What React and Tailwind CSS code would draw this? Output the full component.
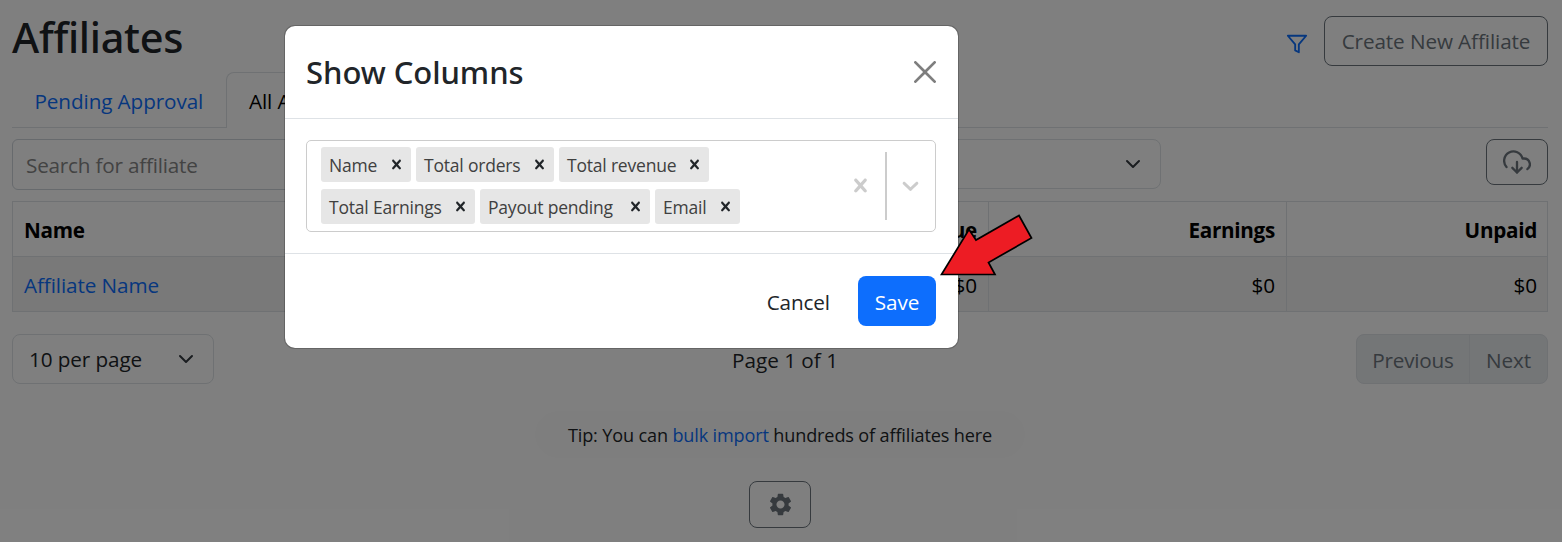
import { FiFilter, FiDownloadCloud } from 'react-icons/fi'
import { MdSettings } from 'react-icons/md'

const rows = [
  ['Name', 'Total orders', 'Total revenue'],
  ['Total Earnings', 'Payout pending', 'Email'],
]
const chipWidths = {
  'Name': 'w-[90px]',
  'Total orders': 'w-[138px]',
  'Total revenue': 'w-[150px]',
  'Total Earnings': 'w-[154px]',
  'Payout pending': 'w-[170px]',
  'Email': 'w-[85px]',
}

function Cross({ className }) {
  return (
    <svg viewBox="0 0 20 20" fill="currentColor" className={className}>
      <path d="M14.348 14.849c-0.469 0.469-1.229 0.469-1.697 0l-2.651-3.030-2.651 3.029c-0.469 0.469-1.229 0.469-1.697 0-0.469-0.469-0.469-1.229 0-1.697l2.758-3.15-2.759-3.152c-0.469-0.469-0.469-1.228 0-1.697s1.228-0.469 1.697 0l2.652 3.031 2.651-3.031c0.469-0.469 1.228-0.469 1.697 0s0.469 1.229 0 1.697l-2.758 3.152 2.758 3.15c0.469 0.469 0.469 1.229 0 1.698z" />
    </svg>
  )
}

function Caret() {
  return (
    <svg viewBox="0 0 16 16" className="size-4" fill="none" stroke="#343a40" strokeWidth="2" strokeLinecap="round" strokeLinejoin="round">
      <path d="m2 5 6 6 6-6" />
    </svg>
  )
}

function Chip({ label }) {
  return (
    <div className={`flex h-[35px] items-center justify-between rounded-[3px] bg-[#e6e6e6] pr-[5px] pl-2 text-[17.5px] tracking-[-0.2px] text-[#404040] ${chipWidths[label]}`}>
      <span className="pt-px">{label}</span>
      <Cross className="size-[19px] text-[#212529]" />
    </div>
  )
}

function Modal() {
  return (
    <div className="absolute top-[25px] left-[284px] flex h-[324px] w-[675px] flex-col rounded-[11px] border border-black/20 bg-white bg-clip-padding">
      <div className="flex h-[93px] items-center justify-between border-b border-[#dee2e6] pr-[22px] pl-[21px]">
        <h2 className="font-['Noto_Sans',sans-serif] text-[31px] leading-none font-medium tracking-[-0.05px] text-[#212529]">Show Columns</h2>
        <svg viewBox="0 0 16 16" className="size-[22px] opacity-50">
          <path d="M.293.293a1 1 0 0 1 1.414 0L8 6.586 14.293.293a1 1 0 1 1 1.414 1.414L9.414 8l6.293 6.293a1 1 0 0 1-1.414 1.414L8 9.414l-6.293 6.293a1 1 0 0 1-1.414-1.414L6.586 8 .293 1.707a1 1 0 0 1 0-1.414z" />
        </svg>
      </div>
      <div className="flex h-[134px] pt-[21px] pl-[21px]">
        <div className="flex h-[92px] w-[630px] rounded-[5px] border border-[#ccc]">
          <div className="flex grow flex-col gap-[7px] pt-1.5 pl-3.5">
            {rows.map((row) => (
              <div key={row[0]} className="flex gap-[5px]">
                {row.map((label) => <Chip key={label} label={label} />)}
              </div>
            ))}
          </div>
          <div className="flex items-center text-[#ccc]">
            <Cross className="mr-[11px] mb-0.5 size-[27px]" />
            <div className="h-[68px] w-0.5 bg-[#ccc]" />
            <svg viewBox="0 0 20 20" fill="currentColor" className="mr-[11px] mb-0.5 ml-[10px] size-[27px]">
              <path d="M4.516 7.548c0.436-0.446 1.043-0.481 1.576 0l3.908 3.747 3.908-3.747c0.533-0.481 1.141-0.446 1.574 0 0.436 0.445 0.408 1.197 0 1.615-0.406 0.418-4.695 4.502-4.695 4.502-0.217 0.223-0.502 0.335-0.787 0.335s-0.57-0.112-0.789-0.335c0 0-4.287-4.084-4.695-4.502s-0.436-1.17 0-1.615z" />
            </svg>
          </div>
        </div>
      </div>
      <div className="flex h-[95px] items-center justify-end gap-7 border-t border-[#dee2e6] pr-[22px]">
        <button className="pt-0.5 text-[20.7px] tracking-[-0.1px] text-[#212529]">Cancel</button>
        <button className="h-[50px] w-[78px] rounded-lg bg-[#0d6efd] pt-0.5 text-[20.7px] tracking-[-0.1px] text-white">Save</button>
      </div>
    </div>
  )
}

function Table() {
  const cell = 'h-[55px] border border-[#dee2e6] px-[11px] pt-0.5 last:pr-[10px]'
  return (
    <table className="mt-[11px] w-[1536px] table-fixed border-collapse text-black">
      <colgroup>
        <col className="w-[380px]" />
        <col className="w-[298px]" />
        <col className="w-[298px]" />
        <col className="w-[298px]" />
        <col className="w-[261px]" />
      </colgroup>
      <thead>
        <tr className="text-right tracking-[-0.3px]">
          <th className={`${cell} text-left`}>Name</th>
          <th className={cell}>Orders</th>
          <th className={cell}>Revenue</th>
          <th className={cell}>Earnings</th>
          <th className={cell}>Unpaid</th>
        </tr>
      </thead>
      <tbody>
        <tr className="bg-[#f2f2f2] text-right">
          <td className={`${cell} text-left text-[#0d6efd]`}>Affiliate Name</td>
          <td className={cell}>0</td>
          <td className={cell}>$0</td>
          <td className={cell}>$0</td>
          <td className={cell}>$0</td>
        </tr>
      </tbody>
    </table>
  )
}

export default function App() {
  return (
    <div className="relative h-[542px] w-[1562px] overflow-hidden bg-white font-['Open_Sans',sans-serif] text-[20.7px] leading-[32px] tracking-[-0.1px] whitespace-nowrap text-[#212529]">
      <div className="flex h-full flex-col pr-[14px] pl-3">
        <div className="flex h-[72px] items-start justify-between pt-4">
          <h1 className="-mt-0.5 font-['Noto_Sans',sans-serif] text-[41.5px] leading-[46px] font-medium tracking-[-0.3px]">Affiliates</h1>
          <div className="flex items-center">
            <FiFilter className="mt-1.5 mr-4 size-[22px] text-[#0d6efd]" />
            <button className="h-[50px] w-[224px] rounded-lg border border-[#6c757d] text-[#6c757d]">Create New Affiliate</button>
          </div>
        </div>
        <div className="flex h-14 items-stretch">
          <div className="w-[214px] border-b border-[#dee2e6] pt-[13px] pl-[22.5px] text-[#0d6efd]">Pending Approval</div>
          <div className="w-[170px] rounded-t-lg border border-b-0 border-[#dee2e6] pt-[12px] pl-[22px] text-black">All Affiliates</div>
          <div className="grow border-b border-[#dee2e6]" />
        </div>
        <div className="mt-[11px] flex h-[51px] items-start">
          <div className="flex h-[51px] w-[560px] items-center rounded-md border border-[#ced4da] pl-[13px] tracking-[-0.2px] text-[#868686]">Search for affiliate</div>
          <div className="ml-6 flex h-[50px] w-[565px] items-center justify-end rounded-lg border border-[#dee2e6] pr-[19px]"><Caret /></div>
          <button className="ml-auto flex h-[46px] w-[62px] items-center justify-center rounded-lg border border-[#6c757d] text-[#6c757d]"><FiDownloadCloud className="size-7" /></button>
        </div>
        <Table />
        <div className="mt-[22px] grid h-[50px] grid-cols-3">
          <div className="flex w-[202px] items-center justify-between rounded-lg border border-[#dee2e6] pr-[19px] pl-4"><span>10 per page</span><Caret /></div>
          <div className="pt-[10px] pl-[10px] text-center tracking-normal">Page 1 of 1</div>
          <div className="flex w-[192px] justify-self-end overflow-hidden rounded-lg border border-[#dee2e6] bg-[#e9ecef] pt-0 text-[#6c757d]">
            <div className="w-[113px] border-r border-[#dee2e6] pt-[9px] text-center tracking-[-0.2px]">Previous</div>
            <div className="grow pt-[9px] text-center">Next</div>
          </div>
        </div>
        <div className="mt-[27px] flex h-[47px] w-[490px] items-center justify-center self-center rounded-full bg-[#fdfdfd] text-[18.1px] tracking-[-0.15px]">
          <span>Tip: You can <span className="text-[#0d6efd]">bulk import</span> hundreds of affiliates here</span>
        </div>
        <button className="mt-[23px] flex h-[47px] w-[62px] shrink-0 items-center justify-center self-center rounded-lg border border-[#6c757d] text-[#6c757d]"><MdSettings className="size-[27px]" /></button>
      </div>
      <div className="absolute inset-0 bg-black/50" />
      <Modal />
      <svg viewBox="0 0 100 70" className="absolute top-[210px] left-[936px] h-[70px] w-[100px]">
        <path d="M5.5 64.5 33 19.5 40 30 83 5.5 95.5 28 52.5 52.5 59 64.5Z" fill="#ed1c24" stroke="#000" strokeWidth="1.7" />
      </svg>
    </div>
  )
}
